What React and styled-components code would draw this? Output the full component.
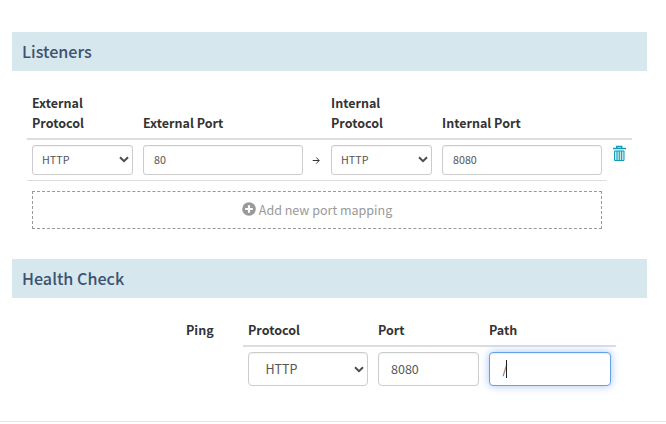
import React from "react";
import styled, { createGlobalStyle } from "styled-components";

const Global = createGlobalStyle`
  * { box-sizing: border-box; }
  body {
    margin: 0;
    background: #fff;
    color: #333;
    font-family: "Noto Sans CJK SC", "Open Sans", sans-serif;
    font-size: 12.53px;
    line-height: 20px;
  }
`;

const Page = styled.main`
  height: 422px;
  padding: 32px 19px 0 12px;
  border-bottom: 1px solid #e5e5e5;
`;

const SectionTitle = styled.h2`
  margin: 0;
  height: 39px;
  padding-left: 10px;
  background: #d6e7ed;
  color: #3d5170;
  font-size: 16.15px;
  font-weight: 500;
  line-height: 39px;
`;

const ListenerTable = styled.div`
  margin: 0 15px;
  height: 188px;
  padding-top: 22px;
`;

const ListenerHead = styled.div`
  display: grid;
  grid-template-columns: 101px 178px 101px 160px;
  column-gap: 10px;
  align-items: end;
  height: 47px;
  padding: 0 5px 5px;
  border-bottom: 2px solid #ddd;
`;

const HeadCell = styled.div`
  font-size: 12.53px;
  font-weight: 700;
  line-height: 20px;
`;

const ListenerLine = styled.div`
  display: flex;
  height: 41px;
`;

const ListenerRow = styled.div`
  display: grid;
  grid-template-columns: 101px 160px 8px 101px 160px;
  column-gap: 10px;
  width: 580px;
  padding: 5px 5px 0;
  border-bottom: 1px solid #ddd;
`;

const Field = styled.div`
  display: flex;
  align-items: center;
  justify-content: space-between;
  height: ${(p) => (p.$large ? 34 : 30)}px;
  padding: 0 ${(p) => (p.$select ? 3 : 12)}px ${(p) => (p.$large ? 0 : 1)}px ${(p) => p.$indent ?? 9}px;
  border: 1px solid ${(p) => (p.$focus ? "#66a0e9" : "#ccc")};
  border-radius: ${(p) => (p.$large ? 4 : 3)}px;
  background: #fff;
  box-shadow: ${(p) =>
    p.$focus
      ? "inset 0 1px 1px rgba(0,0,0,.075), 0 0 8px rgba(102,160,233,.6)"
      : "inset 0 1px 1px rgba(0,0,0,.05)"};
  color: #555;
  font-size: ${(p) => (p.$large ? 12.53 : 10.74)}px;
`;

const Arrow = styled.div`
  display: flex;
  align-items: center;
  height: 30px;
  margin-left: -1px;
`;

const RemoveButton = styled.button`
  display: flex;
  width: 14px;
  height: 17px;
  margin: 5px 0 0 5px;
  padding: 0;
  border: 0;
  background: none;
`;

const AddButton = styled.button`
  display: flex;
  align-items: center;
  justify-content: center;
  gap: 3px;
  width: 570px;
  height: 38px;
  margin: 10px 5px 0;
  padding: 0;
  border: 1px dashed #999;
  background: #fff;
  color: #999;
  font: inherit;

  svg { margin-top: -2px; }
`;

const HealthForm = styled.div`
  display: flex;
  margin-left: 174px;
  padding-top: 22px;
`;

const HealthTable = styled.div`
  width: 373px;
  margin-left: 29px;
`;

const HealthGrid = styled.div`
  display: grid;
  grid-template-columns: 120px 101px 122px;
  column-gap: 10px;
  padding: ${(p) => (p.$head ? "0 5px 5px" : "5px 5px 0")};
  border-bottom: ${(p) => (p.$head ? "2px solid #ddd" : "0")};
`;

const PingLabel = styled(HeadCell)`
  width: 28px;
`;

const Caret = styled.span`
  width: 1px;
  height: 18px;
  margin-left: -1px;
  background: #222;
`;

const PathValue = styled.span`
  display: flex;
  align-items: center;
`;

const Chevron = () => (
  <svg width="10" height="7" viewBox="0 0 10 7">
    <path d="M1 1.2 5 5.2 9 1.2" fill="none" stroke="#4d4d4d" strokeWidth="2" />
  </svg>
);

const ArrowIcon = () => (
  <svg width="8" height="8" viewBox="0 0 8 8">
    <path d="M.7 4.5H7M4.3 1.5 7.2 4.5 4.3 7.5" fill="none" stroke="#333" strokeWidth="1" />
  </svg>
);

const TrashIcon = () => (
  <svg width="14" height="17" viewBox="0 0 14 17">
    <path d="M2.5 5.5h9.5v10h-9.5z" fill="#c5e8ee" />
    <path d="M4.7 3V1.5h5V3M1 3.5h13" fill="none" stroke="#0f9db8" strokeWidth="1.4" />
    <path
      d="M2.5 6v9.5h9.5V6zM5 6v9M7.3 6v9M9.6 6v9"
      fill="none"
      stroke="#0f9db8"
      strokeWidth="1"
    />
  </svg>
);

const PlusIcon = () => (
  <svg width="14" height="14" viewBox="0 0 14 14">
    <circle cx="7" cy="7" r="6.8" fill="#999" />
    <path d="M7 3.2v7.6M3.2 7h7.6" stroke="#fff" strokeWidth="2.2" />
  </svg>
);

function SelectField({ value, ...rest }) {
  return (
    <Field $select {...rest}>
      <span>{value}</span>
      <Chevron />
    </Field>
  );
}

export default function App() {
  return (
    <>
      <Global />
      <Page>
        <SectionTitle>Listeners</SectionTitle>
        <ListenerTable>
          <ListenerHead>
            <HeadCell>External<br />Protocol</HeadCell>
            <HeadCell>External Port</HeadCell>
            <HeadCell>Internal<br />Protocol</HeadCell>
            <HeadCell>Internal Port</HeadCell>
          </ListenerHead>
          <ListenerLine>
            <ListenerRow>
              <SelectField value="HTTP" />
              <Field $indent={10}>80</Field>
              <Arrow><ArrowIcon /></Arrow>
              <SelectField value="HTTP" />
              <Field $indent={10}>8080</Field>
            </ListenerRow>
            <RemoveButton aria-label="Remove"><TrashIcon /></RemoveButton>
          </ListenerLine>
          <AddButton><PlusIcon />Add new port mapping</AddButton>
        </ListenerTable>
        <SectionTitle>Health Check</SectionTitle>
        <HealthForm>
          <PingLabel>Ping</PingLabel>
          <HealthTable>
            <HealthGrid $head>
              <HeadCell>Protocol</HeadCell>
              <HeadCell>Port</HeadCell>
              <HeadCell>Path</HeadCell>
            </HealthGrid>
            <HealthGrid>
              <SelectField value="HTTP" $large $indent={16.5} />
              <Field $large $indent={12}>8080</Field>
              <Field $large $indent={12.5} $focus>
                <PathValue>/<Caret /></PathValue>
              </Field>
            </HealthGrid>
          </HealthTable>
        </HealthForm>
      </Page>
    </>
  );
}
